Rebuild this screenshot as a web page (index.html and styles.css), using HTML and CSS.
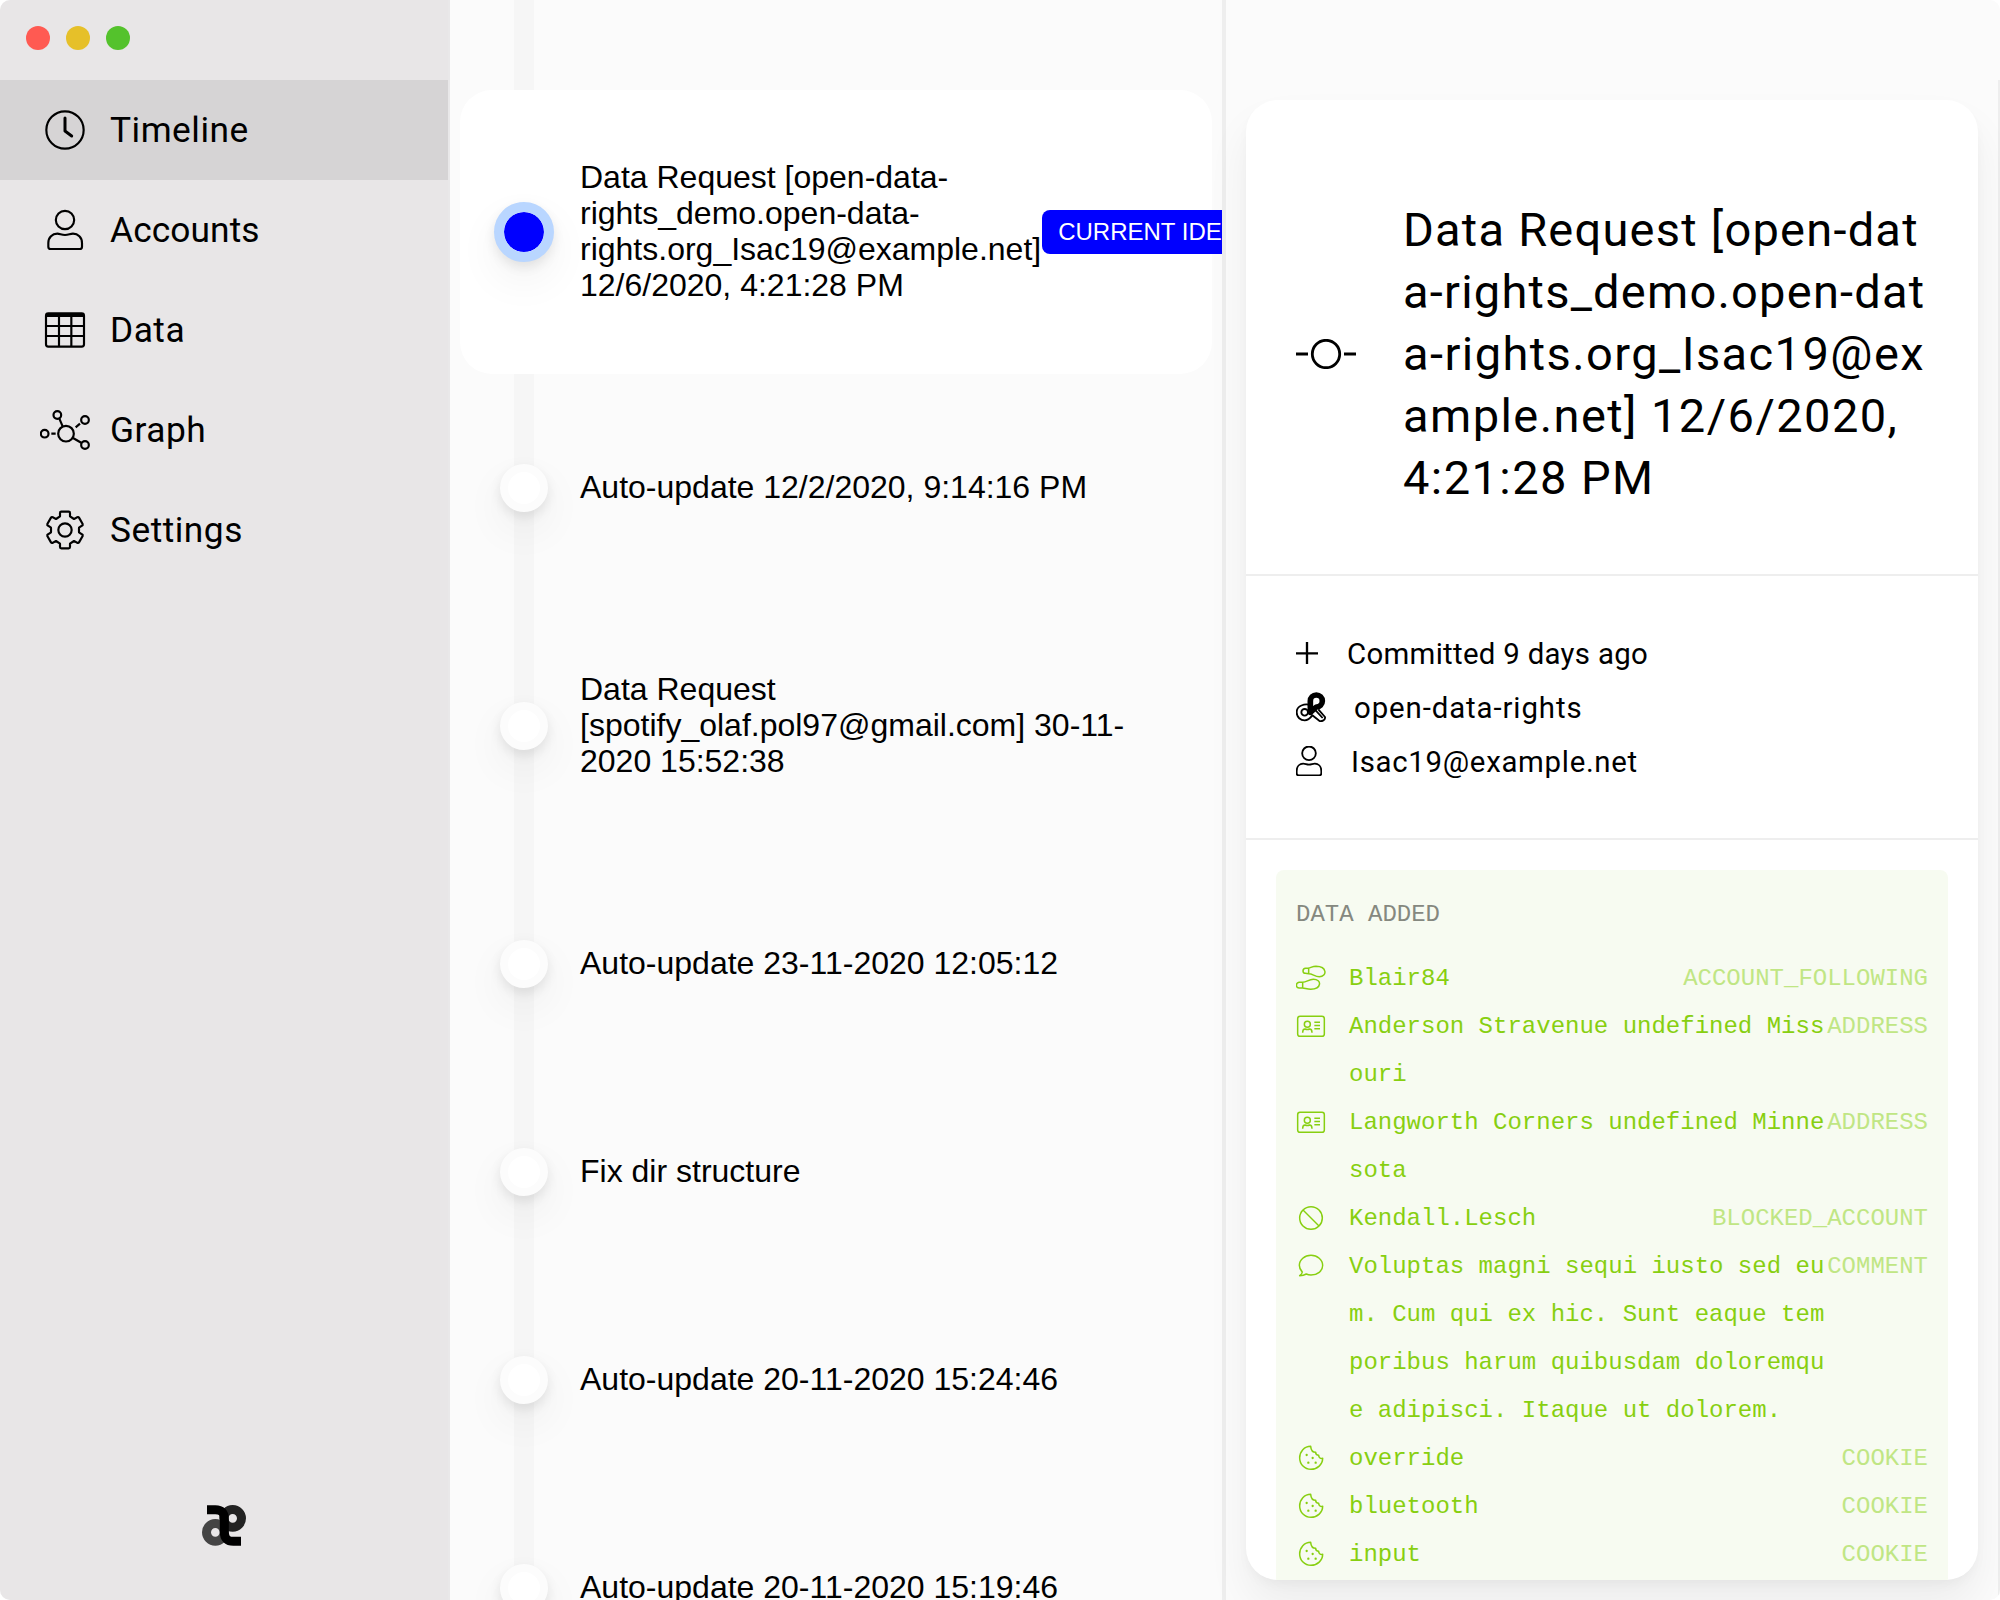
FILE: index.html
```html
<!DOCTYPE html>
<html lang="en">
<head>
<meta charset="utf-8">
<title>Timeline</title>
<link rel="stylesheet" href="styles.css">
</head>
<body>
<svg class="defs" width="0" height="0">
  <symbol id="cookie" viewBox="0 0 90 90">
    <path d="M44 10C25 10 11 26 11 45S26 79 45 79 80 64 80 46C72 47 68 43 68 37C61 37 59 33 59 28C50 28 45 21 44 10Z"/>
    <path class="dots" d="M32 36h0M50 45h0M37 59h0M59 59h0"/>
  </symbol>
  <symbol id="card" viewBox="0 0 90 90">
    <rect x="5" y="16" width="80" height="60" rx="7"/>
    <circle cx="34" cy="39.500" r="9"/>
    <path d="M20 65C20 57 23 54 27 54Q34 57 41 54C46 54 48 57 48 65M55 34H72M55 43.500H72M55 53H72"/>
  </symbol>
</svg>
<div class="window">
  <aside class="sidebar">
    <div class="lights"><i class="red"></i><i class="yellow"></i><i class="green"></i></div>
    <nav>
      <a class="item active"><svg viewBox="120 315 150 150"><circle cx="195" cy="390" r="56"/><path class="hand" d="M195 354V393L215 408"/></svg><span>Timeline</span></a>
      <a class="item"><svg viewBox="120 615 150 150"><circle cx="195" cy="660" r="27.500"/><path d="M145 735V729C145 712 157 701 172 701C180 701 184 705 195 705S210 701 219 701C234 701 246 712 246 729V740Q246 747 239 747H152Q145 747 145 740Z"/></svg><span>Accounts</span></a>
      <a class="item"><svg viewBox="120 75 150 150"><rect x="138" y="100" width="114" height="100" rx="7"/><path d="M138 138H252M138 168H252M177 105V200M214 105V200"/><path class="bar" d="M140 105H250"/></svg><span>Data</span></a>
      <a class="item"><svg viewBox="120 375 150 150"><circle cx="198" cy="461" r="23.500"/><circle cx="134" cy="461" r="11.500"/><circle cx="172" cy="405" r="11.500"/><circle cx="255" cy="420" r="11.500"/><circle cx="255" cy="495" r="11.500"/><path d="M154 461H167M178 416L188 439M227 442L240 431M219 474L245 489"/></svg><span>Graph</span></a>
      <a class="item"><svg viewBox="120 675 150 150"><path d="M184 695H206Q210 695 210 699V709L222 717L231 712Q235 710 237 713L248 732Q249 736 246 737L237 743V757L246 763Q249 764 248 768L237 787Q235 790 231 788L222 783L210 791V801Q210 805 206 805H184Q180 805 180 801V791L168 783L159 788Q155 790 153 787L142 768Q141 764 144 763L153 757V743L144 737Q141 736 142 732L153 713Q155 710 159 712L168 717L180 709V699Q180 695 184 695Z"/><circle cx="195" cy="750" r="20"/></svg><span>Settings</span></a>
    </nav>
    <svg class="logo" viewBox="60 70 144 135"><circle cx="158" cy="116" r="26.500" stroke="#222"/><circle cx="106" cy="158" r="26.500" stroke="#444"/><path d="M81 90H106Q133 90 133 117V158Q133 185 160 185H183" stroke="#000"/></svg>
  </aside>

  <main class="timeline">
    <div class="entry selected"><i class="dot"></i><p>Data Request [open-data-<br>rights_demo.open-data-<br>rights.org_Isac19@example.net]<br>12/6/2020, 4:21:28 PM</p><b class="badge">CURRENT IDENTITY</b></div>
    <div class="entry"><i class="dot"></i><p>Auto-update 12/2/2020, 9:14:16 PM</p></div>
    <div class="entry"><i class="dot"></i><p>Data Request<br>[spotify_olaf.pol97@gmail.com] 30-11-<br>2020 15:52:38</p></div>
    <div class="entry"><i class="dot"></i><p>Auto-update 23-11-2020 12:05:12</p></div>
    <div class="entry"><i class="dot"></i><p>Fix dir structure</p></div>
    <div class="entry"><i class="dot"></i><p>Auto-update 20-11-2020 15:24:46</p></div>
    <div class="entry"><i class="dot"></i><p>Auto-update 20-11-2020 15:19:46</p></div>
  </main>

  <section class="detail">
    <article class="panel">
      <header>
        <svg class="commit" viewBox="0 0 60 30"><circle cx="30" cy="15" r="13.700"/><path d="M0 15H12M48 15H60"/></svg>
        <h1><span>Data Request [open-dat</span><span>a-rights_demo.open-dat</span><span class="wide">a-rights.org_Isac19@ex</span><span class="wide">ample.net] 12/6/2020,</span><span class="wide">4:21:28 PM</span></h1>
      </header>
      <div class="info">
        <div><svg class="plus" viewBox="168 234 66 90"><path d="M168 280H234M201 246V312"/></svg><span>Committed 9 days ago</span></div>
        <div><svg class="rights" viewBox="168 396 90 90"><path d="M206 434C196 432 170 435 170 457C170 472 182 481 194 481C205 481 211 474 217 466L236 481C243 488 257 480 255 471L235 448"/><circle cx="194" cy="457" r="10"/><path d="M202 455L222 446L248 474"/><path class="loop" d="M211 457V423A18 18 0 1 1 229 441Z"/></svg><span>open-data-rights</span></div>
        <div><svg class="who" viewBox="168 558 78 90"><circle cx="207" cy="580" r="20.500"/><path d="M170 637V633C170 619 179 611 190 611C196 611 200 614 207 614S218 611 224 611C235 611 244 619 244 633V640Q244 646 238 646H176Q170 646 170 640Z"/></svg><span>Isac19@example.net</span></div>
      </div>
      <div class="data">
        <h2>DATA ADDED</h2>
        <div class="row"><svg viewBox="168 339 90 90"><path d="M206 354L197 355C186 356 187 370 196 370L206 371C218 371 224 380 238 380C262 379 262 350 228 349C218 349 212 353 206 354ZM206 354V371M188 397L177 397C166 399 167 413 177 414L188 414C196 415 202 418 212 418C246 416 246 388 220 388C206 388 200 397 188 397ZM188 397V414"/></svg><p>Blair84</p><em>ACCOUNT_FOLLOWING</em></div>
        <div class="row"><svg><use href="#card"/></svg><p>Anderson Stravenue undefined Missouri</p><em>ADDRESS</em></div>
        <div class="row"><svg><use href="#card"/></svg><p>Langworth Corners undefined Minnesota</p><em>ADDRESS</em></div>
        <div class="row"><svg viewBox="168 1059 90 90"><circle cx="213" cy="1104" r="34"/><path d="M189 1080L237 1128"/></svg><p>Kendall.Lesch</p><em>BLOCKED_ACCOUNT</em></div>
        <div class="row"><svg viewBox="168 33 90 90"><path d="M187 96C181 90 178 83 178 76C178 59 194 46 213 46S248 59 248 76S232 105 213 105C208 105 203 104 199 102C192 106 186 107 179 107Q186 102 187 96Z"/></svg><p>Voluptas magni sequi iusto sed eum. Cum qui ex hic. Sunt eaque temporibus harum quibusdam doloremque adipisci. Itaque ut dolorem.</p><em>COMMENT</em></div>
        <div class="row"><svg><use href="#cookie"/></svg><p>override</p><em>COOKIE</em></div>
        <div class="row"><svg><use href="#cookie"/></svg><p>bluetooth</p><em>COOKIE</em></div>
        <div class="row"><svg><use href="#cookie"/></svg><p>input</p><em>COOKIE</em></div>
      </div>
    </article>
  </section>
</div>
</body>
</html>
```
FILE: styles.css
```css
* { box-sizing: border-box; margin: 0; padding: 0; }
body { width: 2000px; height: 1600px; overflow: hidden; background: #fff; color: #000; font-family: Roboto, sans-serif; }
svg { display: block; flex: none; fill: none; stroke: currentColor; stroke-width: 5.500; stroke-linejoin: round; }
.defs { position: absolute; }
.window { display: flex; width: 2000px; height: 1600px; border-radius: 10px; overflow: hidden; background: #fbfbfb; }

.sidebar { display: flex; flex-direction: column; flex: none; width: 450px; background: #e8e6e7; border-right: 2px solid #e9e8e9; }
.lights { display: flex; gap: 16px; height: 80px; padding: 26px; }
.lights i { width: 24px; height: 24px; border-radius: 50%; }
.red { background: #ff5a52; }
.yellow { background: #e6c029; }
.green { background: #54c22c; }
.item { display: flex; align-items: center; gap: 20px; height: 100px; padding-left: 40px; font-size: 35.300px; letter-spacing: .5px; }
.item:nth-child(2) { letter-spacing: .1px; }
.item.active { background: #d6d4d5; }
.item svg { width: 50px; height: 50px; stroke-width: 6.500; }
.item .hand { stroke-width: 9; stroke-linecap: round; }
.item .bar { stroke-width: 12; }
.logo { width: 48px; height: 45px; margin: auto auto 52px; stroke-width: 27; }

.timeline { display: flex; flex-direction: column; gap: 20px; flex: none; width: 776px; padding: 90px 10px 0; border-right: 4px solid #eee; overflow: hidden; background: linear-gradient(#f6f6f6, #f6f6f6) 64px 0 / 20px 100% no-repeat; }
.entry { display: flex; align-items: center; flex: none; padding: 70px 40px; border-radius: 32px; font: 32px/36px "Liberation Sans", Arial, sans-serif; white-space: nowrap; }
.entry.selected { background: #fff; }
.entry p { margin: -1px 0 1px; }
.dot { flex: none; width: 48px; height: 48px; margin-right: 32px; border: 8px solid #fcfcfc; border-radius: 50%; background: #fff; box-shadow: 0 5px 12px rgba(0,0,0,.09), 0 18px 44px rgba(0,0,0,.06); }
.selected .dot { width: 60px; height: 60px; margin: 0 26px 0 -6px; border: 10px solid #b9d6ff; background: #00f; background-clip: padding-box; }
.badge { flex: none; margin-left: 1px; padding: 4px 16px; border-radius: 8px; background: #00f; color: #fff; font-size: 24px; font-weight: 400; }

.detail { flex: 1; padding: 100px 22px 20px 20px; background: linear-gradient(#eee, #eee) right 80px / 2px 100% no-repeat; }
.panel { height: 1480px; border-radius: 32px; background: #fff; overflow: hidden; box-shadow: 0 6px 14px -4px rgba(0,0,0,.05), 0 26px 44px rgba(0,0,0,.06); }
header { display: flex; align-items: center; gap: 47px; height: 476px; padding: 34px 50px 0; border-bottom: 2px solid #eee; }
.commit { width: 60px; height: 30px; stroke-width: 2.800; }
h1 { font-size: 47px; line-height: 62px; font-weight: 400; white-space: nowrap; letter-spacing: 1.230px; }
h1 span { display: block; }
h1 .wide { letter-spacing: 1.430px; }
.info { height: 264px; padding: 50px; border-bottom: 2px solid #eee; font-size: 29.400px; letter-spacing: .3px; }
.info div { display: flex; align-items: center; height: 54px; }
.info div:nth-child(2) { letter-spacing: .9px; }
.info div:nth-child(3) { letter-spacing: .7px; }
.info span { margin: 1px 0 -1px; }
.info svg { height: 30px; }
.plus { width: 22px; margin-right: 29px; stroke-width: 7; }
.rights { width: 30px; margin-right: 28px; }
.rights .loop { stroke-width: 17; }
.who { width: 26px; margin-right: 29px; }

.data { height: 760px; margin: 30px 30px 0; padding: 21px 20px; border-radius: 8px; background: #f7fbf1; font: 24px/48px "Liberation Mono", monospace; color: #87cf10; }
h2 { margin-bottom: 16px; font-size: 24px; font-weight: 400; color: #85887f; }
.row { display: flex; }
.row svg { width: 30px; height: 30px; margin: 8px 23px 10px 0; stroke-width: 4.500; }
.row .dots, .dots { stroke-width: 7; stroke-linecap: round; }
.row p { flex: 1; word-break: break-all; }
.row em { font-style: normal; color: #c0e684; }
```
